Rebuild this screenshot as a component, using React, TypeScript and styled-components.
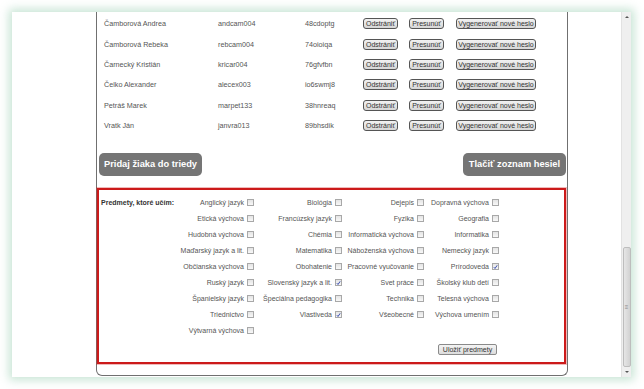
import React from "react";
import styled, { createGlobalStyle } from "styled-components";

const GlobalStyle = createGlobalStyle`
  html, body {
    margin: 0;
    padding: 0;
    background: #ffffff;
  }
  body {
    font-family: "Liberation Sans", Arial, sans-serif;
  }
`;

interface Student {
  name: string;
  login: string;
  password: string;
}

const students: Student[] = [
  { name: "Čamborová Andrea", login: "andcam004", password: "48cdoptg" },
  { name: "Čamborová Rebeka", login: "rebcam004", password: "74oioiqa" },
  { name: "Čarnecký Kristián", login: "kricar004", password: "76gfvfbn" },
  { name: "Čelko Alexander", login: "alecex003", password: "io6swmj8" },
  { name: "Petráš Marek", login: "marpet133", password: "38hnreaq" },
  { name: "Vratk Ján", login: "janvra013", password: "89bhsdik" },
];

type Subject = [string, boolean] | null;

const subjects: Subject[][] = [
  [["Anglický jazyk", false], ["Biológia", false], ["Dejepis", false], ["Dopravná výchova", false]],
  [["Etická výchova", false], ["Francúzsky jazyk", false], ["Fyzika", false], ["Geografia", false]],
  [["Hudobná výchova", false], ["Chémia", false], ["Informatická výchova", false], ["Informatika", false]],
  [["Maďarský jazyk a lit.", false], ["Matematika", false], ["Náboženská výchova", false], ["Nemecký jazyk", false]],
  [["Občianska výchova", false], ["Obohatenie", false], ["Pracovné vyučovanie", false], ["Prírodoveda", true]],
  [["Ruský jazyk", false], ["Slovenský jazyk a lit.", true], ["Svet práce", false], ["Školský klub detí", false]],
  [["Španielsky jazyk", false], ["Špeciálna pedagogika", false], ["Technika", false], ["Telesná výchova", false]],
  [["Triednictvo", false], ["Vlastiveda", true], ["Všeobecné", false], ["Výchova umením", false]],
  [["Výtvarná výchova", false], null, null, null],
];

const Page = styled.div`
  width: 644px;
  height: 389px;
  padding: 12px 0 0 12px;
  box-sizing: border-box;
  overflow: hidden;
`;

const Window = styled.div`
  width: 619px;
  height: 365px;
  background: #ffffff;
  display: flex;
  box-shadow: 0 0 9px 3px rgba(130, 195, 160, 0.45);
`;

const Gutter = styled.div<{ $w: number }>`
  width: ${(p) => p.$w}px;
  flex: none;
`;

const Panel = styled.div`
  width: 473px;
  height: 364px;
  box-sizing: border-box;
  border: 1px solid #707070;
  border-top: none;
  border-radius: 0 0 6px 6px;
  display: flex;
  flex-direction: column;
  padding: 1.5px 0 0 0;
`;

const StudentRow = styled.div`
  height: 20.4px;
  display: grid;
  grid-template-columns: 114px 87px 58px 46px 47px 80px;
  align-items: center;
  padding-left: 7px;
  font-size: 7.2px;
  color: #555;
`;

const SmallButton = styled.span<{ $w: number }>`
  width: ${(p) => p.$w}px;
  height: 11px;
  box-sizing: border-box;
  border: 1px solid #555;
  border-radius: 3px;
  background: linear-gradient(#f2f2f2, #d6d6d6);
  color: #333;
  font-size: 7px;
  display: flex;
  align-items: center;
  justify-content: center;
  white-space: nowrap;
`;

const BigButtons = styled.div`
  display: flex;
  justify-content: space-between;
  margin: 17px 1px 0 2px;
`;

const BigButton = styled.span`
  width: 103px;
  height: 23px;
  border-radius: 5px;
  background: #757575;
  color: #ffffff;
  font-weight: bold;
  font-size: 9.3px;
  display: flex;
  align-items: center;
  justify-content: center;
  white-space: nowrap;
`;

const SubjectBox = styled.div`
  margin: 12px 1px 0 0;
  height: 176px;
  box-sizing: border-box;
  border: 2px solid #cc1a1a;
  box-shadow: 0 0 0 1px rgba(204, 26, 26, 0.3);
  padding: 5px 0 0 2px;
  display: flex;
  flex-direction: column;
`;

const SubjectGrid = styled.div`
  display: grid;
  grid-template-columns: 75px 78px 88px 82px 75px;
  grid-auto-rows: 16px;
  font-size: 7px;
  color: #555;
`;

const FormLabel = styled.span`
  font-weight: bold;
  color: #333;
  display: flex;
  align-items: center;
  white-space: nowrap;
`;

const SubjectCell = styled.label`
  display: flex;
  align-items: center;
  justify-content: flex-end;
  gap: 3px;
  white-space: nowrap;
`;

const Box = styled.span`
  width: 7px;
  height: 7px;
  box-sizing: border-box;
  border: 1px solid #a8a8a8;
  background: linear-gradient(#e4e4e4, #f8f8f8);
  display: flex;
  align-items: center;
  justify-content: center;
`;

const SaveRow = styled.div`
  display: flex;
  justify-content: flex-end;
  padding-right: 67px;
  margin-top: 5px;
`;

const SaveButton = styled.span`
  width: 59px;
  height: 11px;
  box-sizing: border-box;
  border: 1px solid #8a8a8a;
  border-radius: 2px;
  background: linear-gradient(#f4f4f4, #dcdcdc);
  color: #333;
  font-size: 7px;
  display: flex;
  align-items: center;
  justify-content: center;
`;

const Scrollbar = styled.div`
  width: 9px;
  flex: none;
  background: #efefef;
  border-left: 1px solid #e2e2e2;
  display: flex;
  flex-direction: column;
  align-items: center;
`;

const Arrow = styled.span<{ $down?: boolean }>`
  width: 0;
  height: 0;
  border-left: 2px solid transparent;
  border-right: 2px solid transparent;
  ${(p) => (p.$down ? "border-top: 2px solid #555;" : "border-bottom: 2px solid #555;")}
  margin: 4px 0;
`;

const Track = styled.div`
  flex: 1;
  width: 100%;
  display: flex;
  flex-direction: column;
  justify-content: flex-end;
`;

const Thumb = styled.div`
  height: 118px;
  margin: 0 0.5px;
  border: 1px solid #bdbdbd;
  border-radius: 2px;
  background: linear-gradient(90deg, #e6e6e6, #d2d2d2);
  display: flex;
  align-items: center;
  justify-content: center;
  font-size: 6px;
  color: #888;
`;

function Check({ on }: { on: boolean }) {
  return (
    <Box>
      {on && (
        <svg width="6" height="6" viewBox="0 0 6 6">
          <path d="M1 3.2 L2.4 4.8 L5 1" stroke="#2a3fa8" strokeWidth="1.1" fill="none" />
        </svg>
      )}
    </Box>
  );
}

export default function App() {
  return (
    <Page>
      <GlobalStyle />
      <Window>
        <Gutter $w={84} />
        <Panel>
          {students.map((s) => (
            <StudentRow key={s.login}>
              <span>{s.name}</span>
              <span>{s.login}</span>
              <span>{s.password}</span>
              <SmallButton $w={35}>Odstrániť</SmallButton>
              <SmallButton $w={35}>Presunúť</SmallButton>
              <SmallButton $w={80}>Vygenerovať nové heslo</SmallButton>
            </StudentRow>
          ))}
          <BigButtons>
            <BigButton>Pridaj žiaka do triedy</BigButton>
            <BigButton>Tlačiť zoznam hesiel</BigButton>
          </BigButtons>
          <SubjectBox>
            <SubjectGrid>
              {subjects.map((row, r) => (
                <React.Fragment key={r}>
                  {r === 0 ? <FormLabel>Predmety, ktoré učím:</FormLabel> : <span />}
                  {row.map((cell, c) =>
                    cell ? (
                      <SubjectCell key={c}>
                        {cell[0]}
                        <Check on={cell[1]} />
                      </SubjectCell>
                    ) : (
                      <span key={c} />
                    )
                  )}
                </React.Fragment>
              ))}
            </SubjectGrid>
            <SaveRow>
              <SaveButton>Uložiť predmety</SaveButton>
            </SaveRow>
          </SubjectBox>
        </Panel>
        <Gutter $w={53} />
        <Scrollbar>
          <Arrow />
          <Track>
            <Thumb>≡</Thumb>
          </Track>
          <Arrow $down />
        </Scrollbar>
      </Window>
    </Page>
  );
}
